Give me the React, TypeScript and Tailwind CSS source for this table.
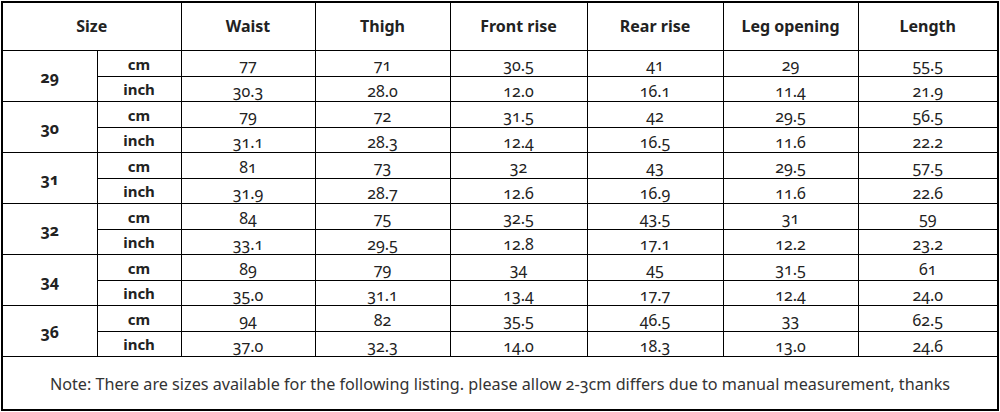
const headers = ['Waist', 'Thigh', 'Front rise', 'Rear rise', 'Leg opening', 'Length'];

const sizes = [
  { size: '29', cm: ['77', '71', '30.5', '41', '29', '55.5'], inch: ['30.3', '28.0', '12.0', '16.1', '11.4', '21.9'] },
  { size: '30', cm: ['79', '72', '31.5', '42', '29.5', '56.5'], inch: ['31.1', '28.3', '12.4', '16.5', '11.6', '22.2'] },
  { size: '31', cm: ['81', '73', '32', '43', '29.5', '57.5'], inch: ['31.9', '28.7', '12.6', '16.9', '11.6', '22.6'] },
  { size: '32', cm: ['84', '75', '32.5', '43.5', '31', '59'], inch: ['33.1', '29.5', '12.8', '17.1', '12.2', '23.2'] },
  { size: '34', cm: ['89', '79', '34', '45', '31.5', '61'], inch: ['35.0', '31.1', '13.4', '17.7', '12.4', '24.0'] },
  { size: '36', cm: ['94', '82', '35.5', '46.5', '33', '62.5'], inch: ['37.0', '32.3', '14.0', '18.3', '13.0', '24.6'] },
];

const font = { fontFamily: '"Noto Sans", "Open Sans", sans-serif', fontFeatureSettings: '"onum" 1' };

export default function App() {
  return (
    <div className="w-[1000px] h-[412px] bg-white pt-[1px] pl-[1px]" style={font}>
      <table className="table-fixed border-collapse border-2 border-black w-[997px] text-[#222]">
        <colgroup>
          <col className="w-[95px]" />
          <col className="w-[84px]" />
          <col className="w-[134px]" />
          <col className="w-[135px]" />
          <col className="w-[137px]" />
          <col className="w-[136px]" />
          <col className="w-[135px]" />
          <col className="w-[140px]" />
        </colgroup>
        <thead>
          <tr className="h-[48px]">
            <th colSpan={2} className="border border-black text-[16px] font-bold">Size</th>
            {headers.map((h) => (
              <th key={h} className="border border-black text-[16px] font-bold">{h}</th>
            ))}
          </tr>
        </thead>
        <tbody>
          {sizes.map((s) => (
            <>
              <tr key={s.size + 'cm'} className="h-[26px]">
                <td rowSpan={2} className="border border-black text-center text-[16px] font-bold pt-[2px]">
                  {s.size}
                </td>
                <td className="border border-black text-center text-[15px] font-bold leading-none pt-[2px]">cm</td>
                {s.cm.map((v, i) => (
                  <td key={i} className="border border-black text-center text-[16px] leading-none pt-[4px]">{v}</td>
                ))}
              </tr>
              <tr key={s.size + 'in'} className="h-[25px]">
                <td className="border border-black text-center text-[15px] font-bold leading-none pt-[2px]">inch</td>
                {s.inch.map((v, i) => (
                  <td key={i} className="border border-black text-center text-[16px] leading-none pt-[4px]">{v}</td>
                ))}
              </tr>
            </>
          ))}
          <tr className="h-[54px]">
            <td colSpan={8} className="border border-black text-center text-[16.2px] text-[#333] pt-[2px]">
              Note: There are sizes available for the following listing. please allow 2-3cm differs due to manual measurement, thanks
            </td>
          </tr>
        </tbody>
      </table>
    </div>
  );
}
